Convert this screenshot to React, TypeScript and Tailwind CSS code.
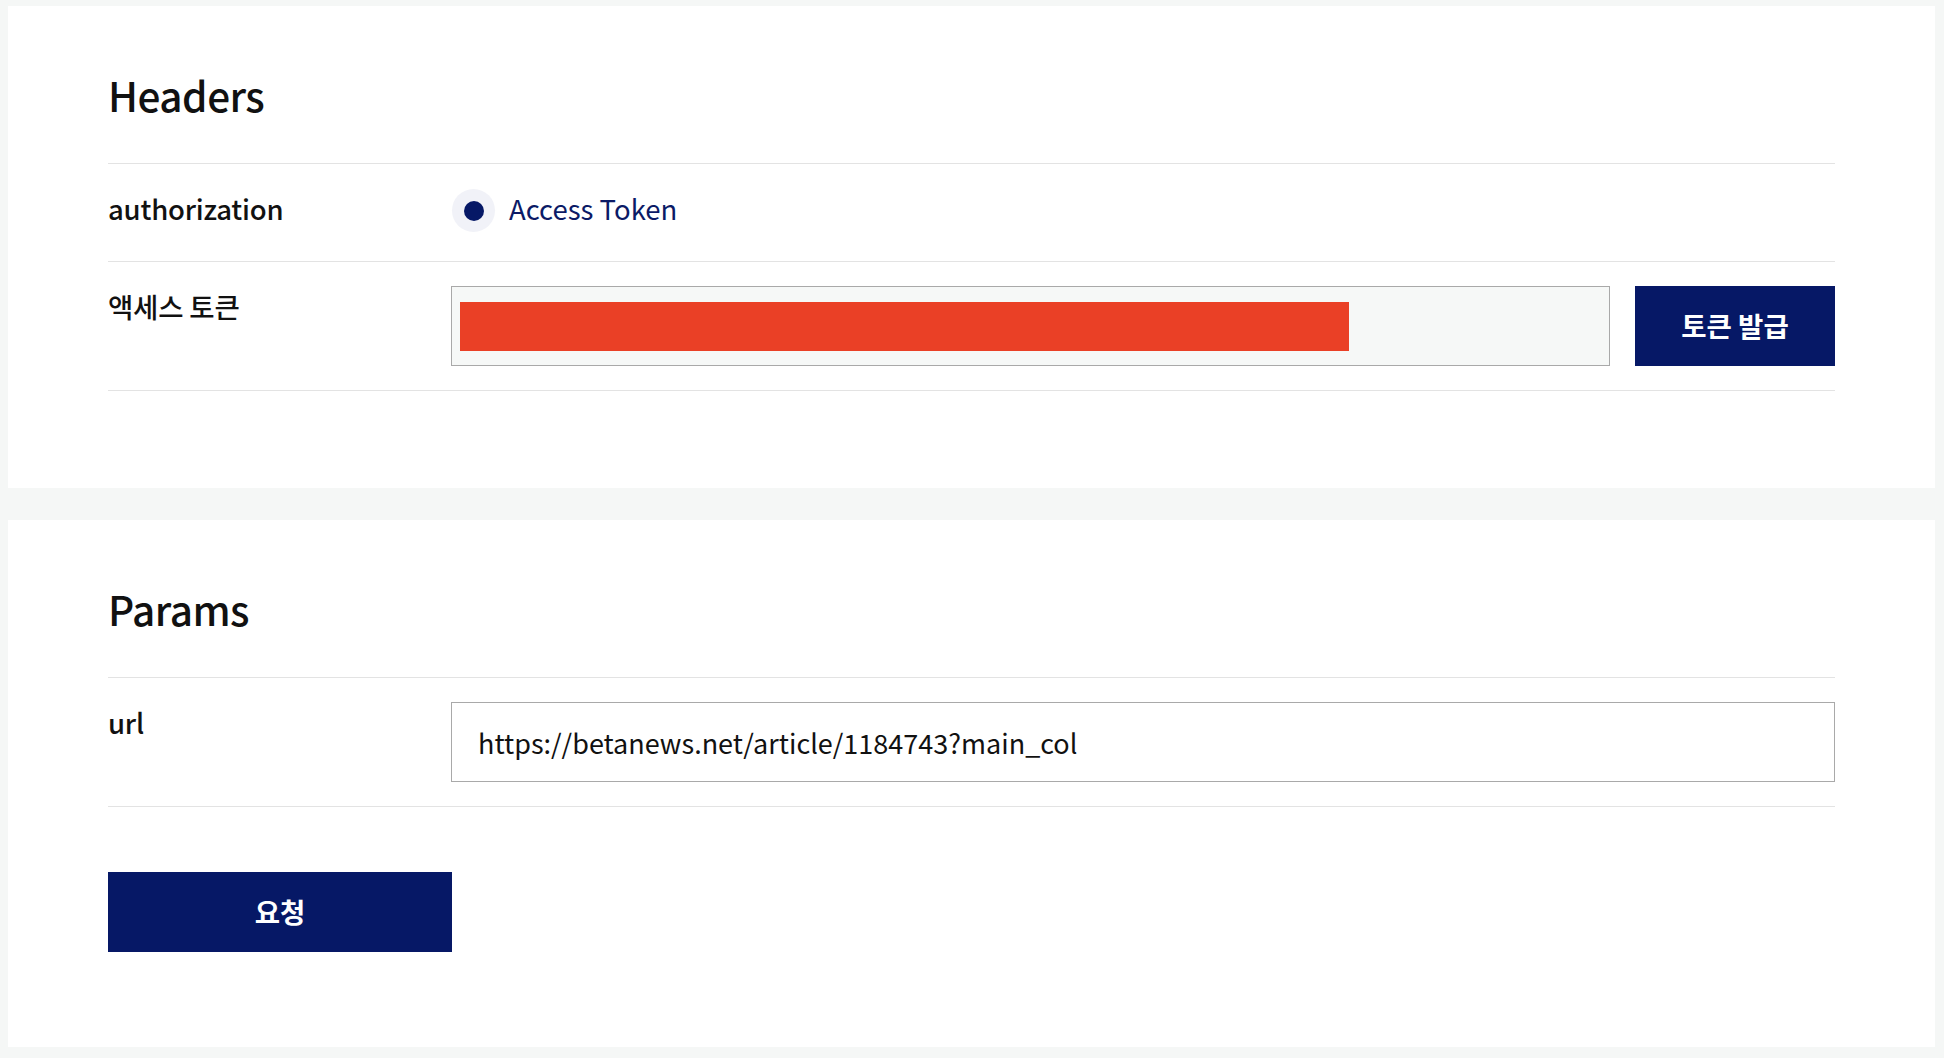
import { useState } from "react";

const font = { fontFamily: '"Noto Sans CJK KR", "Noto Sans", sans-serif' };

const Row = ({ label, children, top = true }: { label: string; children: React.ReactNode; top?: boolean }) => (
  <div className={`flex border-b-[1.5px] border-[#e3e3e3] ${top ? "items-start py-[24px]" : "items-center pt-[22px] pb-[26px]"}`}>
    <div className={`w-[343px] shrink-0 text-[27.5px] font-medium leading-[40px] text-[#111] tracking-[-0.2px] ${top ? "" : "pb-[5px]"}`}>{label}</div>
    <div className="flex flex-1 items-center">{children}</div>
  </div>
);

const App = () => {
  const [url, setUrl] = useState("https://betanews.net/article/1184743?main_col");

  return (
    <div style={font} className="min-h-screen bg-[#f5f7f6] pt-[6px] pl-[8px] pr-[9px] pb-[10px] flex flex-col gap-[32px]">
      <section className="bg-white px-[100px] pt-[59px] pb-[97px]">
        <h2 className="text-[40.5px] font-medium leading-[60px] text-[#111] tracking-[-0.5px] pb-[38px] border-b-[1.5px] border-[#e3e3e3]">Headers</h2>
        <Row label="authorization" top={false}>
          <label className="flex items-center gap-[14px] h-[49px] pl-[1px]">
            <span className="flex h-[43px] w-[43px] items-center justify-center rounded-full bg-[#f1f2f8]">
              <span className="h-[20px] w-[20px] rounded-full bg-[#061866]" />
            </span>
            <span className="pb-[5px] text-[27.5px] leading-[40px] text-[#0b1a66]">Access Token</span>
          </label>
        </Row>
        <Row label="액세스 토큰">
          <div className="flex h-[80px] flex-1 items-center border-[1.5px] border-[#a9a9a9] bg-[#f6f8f7] px-[8px]">
            <div className="h-[49px] w-[889px] bg-[#ea4026]" />
          </div>
          <button className="ml-[25px] h-[80px] w-[200px] bg-[#061866] text-[27.5px] font-bold text-white">토큰 발급</button>
        </Row>
      </section>

      <section className="bg-white px-[100px] pt-[59px] pb-[95px]">
        <h2 className="text-[40.5px] font-medium leading-[60px] text-[#111] tracking-[-0.5px] pb-[38px] border-b-[1.5px] border-[#e3e3e3]">Params</h2>
        <Row label="url">
          <input
            value={url}
            onChange={(e) => setUrl(e.target.value)}
            className="h-[80px] flex-1 border-[1.5px] border-[#a9a9a9] bg-white px-[26px] text-[27px] text-[#111] outline-none"
            style={font}
          />
        </Row>
        <button className="mt-[65px] h-[80px] w-[344px] bg-[#061866] text-[27.5px] font-bold text-white">요청</button>
      </section>
    </div>
  );
};

export default App;
